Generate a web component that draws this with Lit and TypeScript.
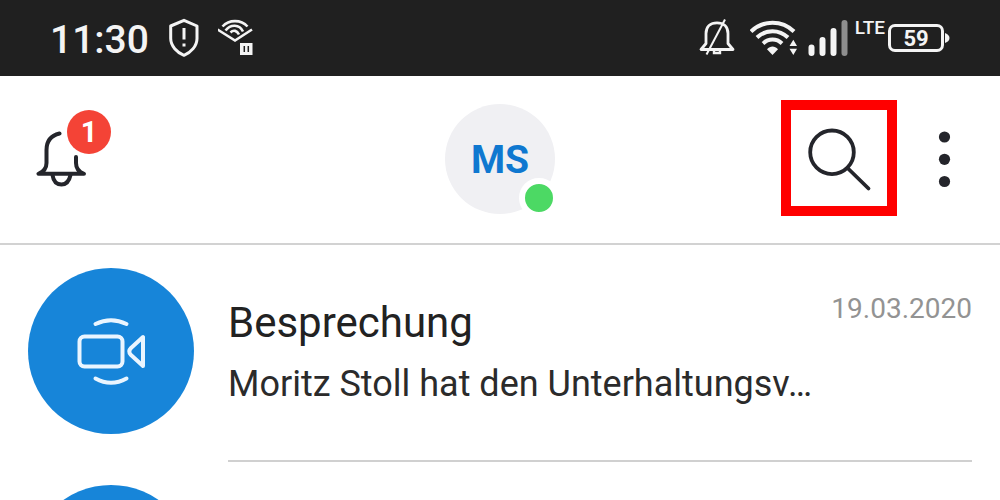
import { LitElement, html, css } from "lit";
import { customElement, property } from "lit/decorators.js";

@customElement("status-bar")
class StatusBar extends LitElement {
  static styles = css`
    :host {
      display: flex;
      justify-content: space-between;
      align-items: center;
      height: 76px;
      padding: 0 50px;
      box-sizing: border-box;
      background: #202020;
      color: #f4f4f4;
      font-weight: 500;
    }
    .group {
      display: flex;
      align-items: center;
    }
    .left {
      gap: 19px;
    }
    .right {
      gap: 15px;
    }
    .time {
      padding-top: 3px;
      font-size: 39px;
      line-height: 40px;
    }
    svg {
      display: block;
      flex: none;
    }
    .network {
      display: flex;
      gap: 3px;
    }
    .lte {
      align-self: flex-start;
      font-size: 19px;
      line-height: 20px;
    }
    .battery {
      display: flex;
      align-items: center;
    }
    .cell {
      box-sizing: border-box;
      width: 56px;
      height: 28px;
      border: 3px solid currentColor;
      border-radius: 7px;
      font-size: 22px;
      line-height: 23px;
      font-weight: 700;
      text-align: center;
    }
  `;

  render() {
    return html`
      <div class="group left">
        <span class="time">11:30</span>
        <svg width="31" height="40" viewBox="168 18 31 40" fill="none" stroke="#f4f4f4" stroke-width="3" stroke-linejoin="round">
          <path d="M184 20.3 197 26V38.5C197 46 191 52.5 184 55.3 177 52.5 170.7 46 170.7 38.5V26Z" />
          <path d="M184 28V39.5M184 43.5V46.5" />
        </svg>
        <svg width="38" height="40" viewBox="218 18 38 40" fill="none" stroke="#f4f4f4" stroke-width="2.6">
          <path d="M217.500 29.5 235 40.5 252 29.5" />
          <path d="M222.5 26.5C229 19.3 241 19.3 247.5 26.5" />
          <path d="M225.5 30.5C230.5 24 239.5 24 243 31.5" />
          <path d="M230.5 32.5C233.5 29.5 237 30.5 239 34.5" />
          <path d="M240 43H252.5V55H240Z" fill="#f4f4f4" stroke="none" />
          <path d="M244.3 46V52M248.3 46V52" stroke="#202020" stroke-width="1.5" />
        </svg>
      </div>
      <div class="group right">
        <svg width="36" height="40" viewBox="698 18 36 40" fill="none" stroke="#f4f4f4" stroke-width="2.8">
          <path d="M700 49.5H732L727 43.5V33.5C727 26.5 722.5 22.8 716 22.8S705 26.5 705 33.5V43.5Z" stroke-linejoin="round" />
          <path d="M724 19.5 705.5 54.5" stroke-width="2" />
          <path d="M713 50V53H719V50" stroke-width="2.4" />
        </svg>
        <div class="network">
          <svg width="49" height="40" viewBox="750 18 49 40" fill="none" stroke="#f4f4f4" stroke-width="4">
            <path d="M751 31.5C763 19.8 782 19.8 794 31.5" />
            <path d="M757 37.5C766 29 779 29 788 37.5" />
            <path d="M763 43.5C768.5 38.3 776.5 38.3 782 43.5" />
            <path d="M767 49.3C770.5 45.5 774.5 45.5 778 49.3L772.5 55Z" fill="#f4f4f4" stroke="none" />
            <path d="M789.5 46 793.3 39.8 797 46ZM789.5 48.7H797L793.3 55Z" fill="#f4f4f4" stroke="none" />
          </svg>
          <svg width="50" height="40" viewBox="802 18 50 40" fill="none" stroke="#f4f4f4" stroke-width="6" stroke-linecap="round">
            <path d="M811.5 47.5V53M822.5 40V53M833.5 31V53" />
            <path d="M844.5 23V53" stroke="#8e8e8e" />
          </svg>
          <span class="lte">LTE</span>
          <span class="battery">
            <span class="cell">59</span>
            <svg width="6" height="12" viewBox="0 0 6 12"><path d="M1 1C4 2 5.5 4 5.5 6S4 10 1 11Z" fill="#f4f4f4" /></svg>
          </span>
        </div>
      </div>
    `;
  }
}

@customElement("chat-row")
class ChatRow extends LitElement {
  @property() heading = "";
  @property() preview = "";
  @property() date = "";

  static styles = css`
    :host {
      display: flex;
      gap: 34px;
      padding: 0 28px;
    }
    .avatar {
      flex: none;
      width: 166px;
      height: 166px;
      margin-top: 23px;
      border-radius: 50%;
      background: #1785d9;
    }
    .body {
      flex: 1;
      min-width: 0;
      box-sizing: border-box;
      min-height: 217px;
      padding-top: 48px;
      border-bottom: 2px solid #d0d0d0;
    }
    .top {
      display: flex;
      justify-content: space-between;
      align-items: flex-start;
    }
    h2 {
      margin: 0;
      font-size: 42px;
      line-height: 60px;
      font-weight: 400;
      color: #222;
    }
    time {
      font-size: 28px;
      line-height: 32px;
      color: #939393;
    }
    p {
      margin: 0;
      font-size: 36px;
      line-height: 62px;
      color: #2b2b2b;
      white-space: nowrap;
    }
  `;

  render() {
    return html`
      <svg class="avatar" viewBox="28 268 166 166" fill="none" stroke="#eaf5ff" stroke-width="4" stroke-linecap="round" stroke-linejoin="round" aria-hidden="true">
        <rect x="79.5" y="336.5" width="43" height="30" rx="5" />
        <path d="M143 337V366L131 355Q127.5 351.5 131 348Z" />
        <path d="M95.5 324Q111 316.5 126.5 324M95.5 378.5Q111 387 126.5 378.5" />
      </svg>
      <div class="body">
        <div class="top">
          <h2>${this.heading}</h2>
          <time>${this.date}</time>
        </div>
        <p>${this.preview}</p>
      </div>
    `;
  }
}

@customElement("app-root")
class AppRoot extends LitElement {
  static styles = css`
    :host {
      display: block;
      height: 100vh;
      overflow: hidden;
      background: #fff;
      font-family: Roboto, "Liberation Sans", sans-serif;
    }
    header {
      display: grid;
      grid-template-columns: 1fr auto 1fr;
      align-items: center;
      padding: 24px 36px 27px;
      border-bottom: 2px solid #d2d2d2;
    }
    button {
      display: block;
      padding: 0;
      border: 0;
      background: none;
      font: inherit;
      color: inherit;
    }
    svg {
      display: block;
    }
    .alerts {
      position: relative;
      justify-self: start;
    }
    .count {
      position: absolute;
      top: 2px;
      left: 31px;
      width: 44px;
      height: 44px;
      border-radius: 50%;
      background: #f44336;
      color: #fff;
      font-size: 29px;
      line-height: 44px;
      font-weight: 700;
      text-align: center;
    }
    .profile {
      position: relative;
      width: 110px;
      height: 110px;
      margin-top: 2px;
      padding-top: 2px;
      border-radius: 50%;
      background: #f0f0f3;
      color: #0f78d0;
      font-size: 39px;
      font-weight: 700;
    }
    .presence {
      position: absolute;
      right: -4px;
      bottom: -4px;
      width: 28px;
      height: 28px;
      border: 6px solid #fff;
      border-radius: 50%;
      background: #4cd964;
    }
    .tools {
      display: flex;
      justify-self: end;
      align-items: center;
      gap: 31px;
      padding-right: 4px;
    }
    .search {
      border: 10px solid #f00;
    }
  `;

  render() {
    return html`
      <status-bar></status-bar>
      <header>
        <button class="alerts" aria-label="Benachrichtigungen">
          <svg width="76" height="100" viewBox="36 108 76 100" fill="none" stroke="#24252b" stroke-width="4" stroke-linecap="round">
            <path d="M59.5 133.5C51 135.5 46.5 141.5 46.5 150V163C46.5 168 43 172 38.5 173.8H84C79 172 76 168 76 163V157" stroke-linejoin="round" />
            <path d="M52.500 175C53.5 182 57 184.5 61.5 184.5S69 182 70.500 175" />
          </svg>
          <span class="count">1</span>
        </button>
        <button class="profile">MS<span class="presence"></span></button>
        <div class="tools">
          <button class="search" aria-label="Suchen">
            <svg width="96" height="96" viewBox="791 110 96 96" fill="none" stroke="#24252b" stroke-width="3.8" stroke-linecap="round">
              <circle cx="832" cy="152.3" r="21.8" />
              <path d="M847.5 168 868.5 188.5" />
            </svg>
          </button>
          <button aria-label="Mehr">
            <svg width="32" height="80" viewBox="928 118 32 80" fill="#24252b">
              <circle cx="944.5" cy="137" r="5.6" />
              <circle cx="944.5" cy="159.3" r="5.6" />
              <circle cx="944.5" cy="181.5" r="5.6" />
            </svg>
          </button>
        </div>
      </header>
      <main>
        <chat-row heading="Besprechung" preview="Moritz Stoll hat den Unterhaltungsv…" date="19.03.2020"></chat-row>
        <chat-row></chat-row>
      </main>
    `;
  }
}
